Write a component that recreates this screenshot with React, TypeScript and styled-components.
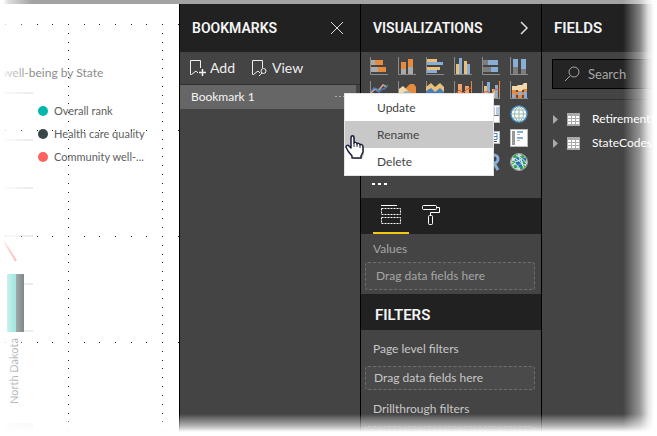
import React from "react";
import styled, { createGlobalStyle, css } from "styled-components";

const GlobalStyle = createGlobalStyle`
  * { box-sizing: border-box; }
  body {
    margin: 0;
    background: #fff;
    font-family: Lato, "Open Sans", sans-serif;
    font-size: 12px;
    line-height: 16px;
    overflow: hidden;
  }
  button, input { font: inherit; color: inherit; }
  button { border: 0; padding: 0; background: none; text-align: left; }
  h2, h3, p, ul { margin: 0; padding: 0; }
  ul { list-style: none; }
`;

const Frame = styled.div`
  position: relative;
  display: flex;
  flex-direction: column;
  height: 100vh;
  overflow: hidden;
`;

const TopStrip = styled.div`
  flex: none;
  height: 4px;
  background: #a3a3a3;
`;

const Workspace = styled.main`
  flex: 1;
  min-height: 0;
  display: grid;
  grid-template-columns: minmax(0, 1fr) 181px 181px 116px;
`;

const Fade = styled.div<{ $side: "left" | "right" | "bottom" }>`
  position: absolute;
  pointer-events: none;
  z-index: 5;
  ${(p) =>
    p.$side === "left" &&
    css`
      inset: 0 auto 0 0;
      width: 32px;
      background: linear-gradient(to right, #fff 3px, rgba(255, 255, 255, 0.65) 8px, rgba(255, 255, 255, 0));
    `}
  ${(p) =>
    p.$side === "right" &&
    css`
      inset: 0 0 0 auto;
      width: 34px;
      background: linear-gradient(to left, #fff 3px, rgba(255, 255, 255, 0.85) 9px, rgba(255, 255, 255, 0.45) 17px, rgba(255, 255, 255, 0));
    `}
  ${(p) =>
    p.$side === "bottom" &&
    css`
      inset: auto 0 0 0;
      height: 22px;
      background: linear-gradient(to top, #fff 4px, rgba(255, 255, 255, 0.6) 10px, rgba(255, 255, 255, 0));
    `}
`;

const Report = styled.section`
  position: relative;
  overflow: hidden;
  background: #fff;
  padding-top: 61px;
`;

const ChartDrawing = styled.svg`
  position: absolute;
  top: 0;
  left: 0;
`;

const ChartTitle = styled.h3`
  font-weight: 400;
  font-size: 12px;
  color: #8c8c8c;
  white-space: nowrap;
  padding-left: 3px;
`;

const Legend = styled.ul`
  padding: 18px 0 0 38px;
`;

const LegendItem = styled.li`
  display: flex;
  align-items: center;
  gap: 6px;
  height: 23px;
  font-size: 11px;
  color: #606060;
  white-space: nowrap;
`;

const Swatch = styled.span<{ $color: string }>`
  width: 10px;
  height: 10px;
  border-radius: 50%;
  background: ${(p) => p.$color};
`;

const Panel = styled.section`
  min-width: 0;
  border-left: 1px solid #000;
  background: #444;
  color: #fff;
`;

const PanelHeader = styled.header`
  display: flex;
  align-items: center;
  justify-content: space-between;
  height: 48px;
  padding: 0 12px;
  background: #212121;
`;

const PanelTitle = styled.h2<{ $large?: boolean }>`
  font-family: Roboto, sans-serif;
  font-size: ${(p) => (p.$large ? 15 : 14)}px;
  line-height: 20px;
  font-weight: 600;
  color: #f5f5f5;
`;

const IconButton = styled.button`
  display: flex;
  color: #ddd;
`;

const BookmarkTools = styled.div`
  display: flex;
  gap: 16px;
  height: 33px;
  padding: 0 9px;
  border-bottom: 1px solid #303030;
`;

const ToolButton = styled.button`
  display: flex;
  align-items: center;
  gap: 3px;
  font-size: 14px;
  color: #eee;
`;

const BookmarkRow = styled.div`
  position: relative;
  display: flex;
  align-items: center;
  justify-content: space-between;
  height: 24px;
  margin-right: 4px;
  padding: 0 12px 0 11px;
  background: #666;
`;

const BookmarkName = styled.button`
  color: #f5f5f5;
`;

const Menu = styled.div`
  position: absolute;
  top: 8px;
  right: -138px;
  z-index: 3;
  width: 150px;
  border: 1px solid #e4e4e4;
  background: #fff;
`;

const MenuItem = styled.button<{ $active?: boolean }>`
  display: block;
  width: 100%;
  height: 27px;
  padding: 0 32px;
  color: #444;
  background: ${(p) => (p.$active ? "#c8c8c8" : "#fff")};
`;

const Pointer = styled.svg`
  position: absolute;
  top: 40px;
  left: 0;
`;

const Gallery = styled.div`
  display: grid;
  grid-template-columns: repeat(6, 18px);
  gap: 6px 10px;
  padding: 5px 9px 9px;
`;

const GalleryButton = styled.button`
  display: flex;
  height: 18px;
`;

const MoreButton = styled.button`
  display: flex;
  margin: 0 0 12px 10px;
`;

const TabBar = styled.div`
  display: flex;
  gap: 4px;
  height: 36px;
  padding: 0 12px;
  background: #212121;
`;

const Tab = styled.button<{ $active?: boolean }>`
  display: flex;
  align-items: center;
  justify-content: center;
  width: 36px;
  border-bottom: 2px solid ${(p) => (p.$active ? "#f2c811" : "transparent")};
`;

const Well = styled.div<{ $dim?: boolean }>`
  display: flex;
  flex-direction: column;
  gap: ${(p) => (p.$dim ? 5 : 9)}px;
  padding: ${(p) => (p.$dim ? "7px 6px 4px 4px" : "11px 6px 0 4px")};
  color: ${(p) => (p.$dim ? "#a6a6a6" : "#c8c8c8")};
`;

const WellLabel = styled.p`
  padding-left: 8px;
`;

const DropZone = styled.div<{ $dim?: boolean }>`
  display: flex;
  align-items: center;
  height: ${(p) => (p.$dim ? 28 : 24)}px;
  padding-left: ${(p) => (p.$dim ? 10 : 8)}px;
  border: 1px dashed #6e6e6e;
  border-radius: 3px;
  background: #4a4a4a;
`;

const FiltersHeader = styled.header`
  display: flex;
  align-items: center;
  height: 36px;
  padding: 6px 14px 0;
  background: #212121;
`;

const SearchBox = styled.label`
  display: flex;
  align-items: center;
  gap: 8px;
  height: 30px;
  margin: 7px 0 10px 10px;
  padding-left: 11px;
  border: 1px solid #000;
  background: #242424;
  color: #a6a6a6;
`;

const SearchInput = styled.input`
  min-width: 0;
  flex: 1;
  padding: 0;
  border: 0;
  outline: 0;
  background: none;
  font-size: 13px;
  &::placeholder { color: #a6a6a6; opacity: 1; }
`;

const TableList = styled.ul`
  padding: 7px 0 0 11px;
  border-top: 1px solid #303030;
`;

const TableButton = styled.button`
  display: flex;
  align-items: center;
  height: 24px;
  color: #fff;
  white-space: nowrap;
`;

const TableName = styled.span`
  padding-left: 12px;
`;

const O = "#e68a3e";
const B = "#88add6";
const Y = "#eac078";
const G = "#aaa";
const D = "#7d7d7d";

const Axis = () => <path d="M.5 0V17.5H18" fill="none" stroke="#8c8c8c" />;

const Tile = () => <rect x=".5" y=".5" width="17" height="17" fill="#fff" stroke="#bbb" />;

const glyphs: { name: string; art: React.ReactNode }[] = [
  { name: "Stacked bar chart", art: <><Axis /><path fill={G} d="M1 3h4v5H1zM1 10h7v5H1z" /><path fill={O} d="M5 3h8v5H5zM8 10h8v5H8z" /></> },
  { name: "Stacked column chart", art: <><Axis /><path fill={G} d="M3 12h5v5H3zM10 10h5v7h-5z" /><path fill={O} d="M3 5h5v7H3zM10 2h5v8h-5z" /></> },
  { name: "Clustered bar chart", art: <><Axis /><path fill={Y} d="M1 2h10v3H1zM1 10h13v3H1z" /><path fill={B} d="M1 5h16v3H1zM1 13h10v3H1z" /></> },
  { name: "Clustered column chart", art: <><Axis /><path fill={Y} d="M2 7h3v10H2zM10 4h3v13h-3z" /><path fill={B} d="M5 1h3v16H5zM13 7h3v10h-3z" /></> },
  { name: "100% stacked bar chart", art: <><Axis /><path fill={D} d="M1 3h5v5H1zM1 10h8v5H1z" /><path fill={B} d="M6 3h10v5H6zM9 10h7v5H9z" /></> },
  { name: "100% stacked column chart", art: <><Axis /><path fill={D} d="M3 10h5v7H3zM11 12h5v5h-5z" /><path fill={B} d="M3 2h5v8H3zM11 2h5v10h-5z" /></> },
  { name: "Line chart", art: <><Axis /><path d="M1 12 5 8 8 10 13 4 17 6" fill="none" stroke="#e0a090" strokeWidth="1.5" /><path d="M1 10 4 7 7 8 9 11 12 8 14 8 18 4" fill="none" stroke="#467fba" strokeWidth="1.5" /></> },
  { name: "Area chart", art: <><Axis /><path fill={O} d="M7 8 12 3h4l2 3v11H7z" /><path fill="#f3d9ae" d="M1 8 5 5l4 4 3 3v5H1z" /><path fill={B} d="M1 14 8 10l10 3v4H1z" /></> },
  { name: "Stacked area chart", art: <><Axis /><path fill={Y} d="M0 6 5 2l4 4 5-4 4 4v6H0z" /><path fill="#467fba" d="M0 10 5 7l4 4 5-4 4 4v6H0z" /></> },
  { name: "Line and stacked column chart", art: <><path d="M.5 0V17.5H17.5" fill="none" stroke="#8c8c8c" /><path d="M17.5 0V18" stroke={O} /><path fill="#f0a46b" d="M4 3h4v14H4zM11 5h4v12h-4z" /><path d="m1 13 4-4 4 3 4-4 4-1" fill="none" stroke="#d45b38" /></> },
  { name: "Line and clustered column chart", art: <><Axis /><path d="M17.5 0V18" stroke={O} /><path fill={Y} d="M2 5h3v12H2zM10 8h3v9h-3z" /><path fill={B} d="M5 1h3v16H5zM13 4h3v13h-3z" /><path d="m1 12 4-2 4 3 4-5 4 1" fill="none" stroke="#d45b38" /></> },
  { name: "Ribbon chart", art: <><Axis /><path fill="#f3d9ae" d="M2 5h5l1-1h4l2-2h3v6h-3l-2 2H8L7 9H2z" /><path fill={O} d="M2 9h5l1 1h4l2-2h3v9H2z" /><path fill={B} d="M2 13h3v4H2zM8 11h4v3H8zM14 11h3v6h-3z" /><path fill="#714536" d="M6 9h2v2H6zM12 9h2v2h-2zM6 14h2v3H6zM12 14h2v3h-2z" /></> },
  { name: "Waterfall chart", art: <><Axis /><path fill={O} d="M3 3h4v9H3z" /></> },
  { name: "Scatter chart", art: <><Axis /><circle cx="8" cy="8" r="3" fill={B} /></> },
  { name: "Pie chart", art: <circle cx="9" cy="9" r="8" fill={O} /> },
  { name: "Donut chart", art: <circle cx="9" cy="9" r="6" fill="none" stroke={B} strokeWidth="4" /> },
  { name: "Treemap", art: <><Tile /><path fill="#b9cce3" d="M2 2h7v14H2zM10 2h3v8h-3zM14 2h3v8h-3z" /><path d="M10 10.5h7" stroke="#777" /></> },
  { name: "Map", art: <><circle cx="9" cy="9" r="8" fill="#fff" stroke="#4a8cc4" strokeWidth="1.5" /><path d="M9 1v16M1 9h16M3 5h12M3 13h12M9 1C3 5 3 13 9 17M9 1c6 4 6 12 0 16" fill="none" stroke="#90b8aa" /></> },
  { name: "Filled map", art: <circle cx="9" cy="9" r="8" fill={B} /> },
  { name: "Funnel", art: <path fill={Y} d="M1 2h16v4H1zM4 7h10v4H4z" /> },
  { name: "Gauge", art: <path d="M2 14a7 7 0 0 1 14 0" fill="none" stroke={B} strokeWidth="4" /> },
  { name: "Multi-row card", art: <Tile /> },
  { name: "Card", art: <><rect x=".5" y="2.5" width="17" height="12" fill="#fff" stroke="#bbb" /><path d="M12 4.500h3v6h-3M12 7.500h3M3 5h1v6M6 5h3v3H6v3h3" fill="none" stroke="#467fba" /><path d="M3 12.500h12" stroke="#555" /></> },
  { name: "Slicer", art: <><Tile /><path fill="#999" d="M2 2h3v14H2z" /><path fill={B} d="M7 2h6v2H7zM7 8h6v2H7z" /><path fill="#b5b5b5" d="M7 5h3v1H7zM7 11h3v1H7z" /></> },
  { name: "KPI", art: <Tile /> },
  { name: "Table", art: <Tile /> },
  { name: "Matrix", art: <Tile /> },
  { name: "Shape map", art: <circle cx="9" cy="9" r="8" fill={B} /> },
  { name: "R script visual", art: <path d="M7 17V2h5a4 4 0 0 1 0 8H8m4 0 4 7" fill="none" stroke={B} strokeWidth="3" /> },
  { name: "ArcGIS map", art: <><circle cx="9" cy="9" r="8" fill="#cfe0e6" /><path d="M3 4 8 2M2 10 5 9M4 14 7 13M10 5l4-2M13 10l3-1M10 16l5-3" stroke="#2da54b" strokeWidth="3" /><path d="M5 7 9 5M6 11l5-2M8 14l4-2M12 7l4-1" stroke="#2673aa" strokeWidth="3" /><path d="M2 5c5 0 10 5 12 10M6 2c5 2 9 6 11 9M1 9c4 1 8 4 9 8" fill="none" stroke="#e4eeee" /><circle cx="9" cy="9" r="8.5" fill="none" stroke="#aaa" /></> },
];

const dotColumns = [5, 21, 37, 52, 68, 84, 99, 115, 131, 146, 162, 178];
const dotRows = Array.from({ length: 47 }, (_, i) => Math.round(20 + i * 8.83));
const gridRows = [89, 136, 184, 232, 280, 327];

const Chart = () => (
  <ChartDrawing width="179" height="432" aria-hidden="true">
    {gridRows.map((y) => <rect key={y} x="4" y={y - 1} width="29" height="2" fill="#ebebeb" />)}
    <path d="M0 231 16 257" stroke="#fd625e" strokeWidth="2" opacity=".75" />
    <rect x="7" y="270" width="9" height="58" fill="#57d3c7" />
    <rect x="16" y="270" width="8" height="58" fill="#5b686a" />
    <rect x="4" y="419" width="29" height="9" fill="#f2f2f2" />
    <text transform="translate(18 400) rotate(-90)" fontSize="11" fill="#7a7a7a">North Dakota</text>
    {[20, 126, 232, 338].map((y) => dotColumns.map((x) => <rect key={`${x}-${y}`} x={x} y={y} width="1" height="1" fill="#222" />))}
    {[68, 162].map((x) => dotRows.map((y) => <rect key={`${x}-${y}`} x={x} y={y} width="1" height="1" fill="#222" />))}
  </ChartDrawing>
);

const BookmarkIcon = ({ view }: { view?: boolean }) => (
  <svg width="18" height="18" viewBox="0 0 18 18" fill="none" stroke="#eee" aria-hidden="true">
    <path d="M9 14 7 12 2.500 15.500H1.500V1.500H11.500V9" />
    {view ? <><circle cx="12.500" cy="12" r="2.500" /><path d="m11 14-3 3" /></> : <path d="M13.500 10v7M10 13.500h7" strokeWidth="1.500" />}
  </svg>
);

const TableIcon = () => (
  <svg width="13" height="13" viewBox="0 0 13 13" aria-hidden="true">
    <path fill="#aaa" d="M0 0h13v13H0z" />
    <path fill="#fff" d="M1 3h3v2H1zM5 3h3v2H5zM9 3h3v2H9zM1 6h3v2H1zM5 6h3v2H5zM9 6h3v2H9zM1 9h3v2H1zM5 9h3v2H5zM9 9h3v2H9z" />
  </svg>
);

const legend = [
  { label: "Overall rank", color: "#01b8aa" },
  { label: "Health care quality", color: "#374649" },
  { label: "Community well-...", color: "#fd625e" },
];

export default function App() {
  return (
    <Frame>
      <GlobalStyle />
      <TopStrip />
      <Workspace>
        <Report>
          <ChartTitle>well-being by State</ChartTitle>
          <Legend>
            {legend.map((l) => <LegendItem key={l.label}><Swatch $color={l.color} />{l.label}</LegendItem>)}
          </Legend>
          <Chart />
        </Report>

        <Panel>
          <PanelHeader>
            <PanelTitle>BOOKMARKS</PanelTitle>
            <IconButton aria-label="Close">
              <svg width="20" height="14" viewBox="0 0 20 14" fill="none" stroke="currentColor"><path d="m3 1 12 12M15 1 3 13" /></svg>
            </IconButton>
          </PanelHeader>
          <BookmarkTools>
            <ToolButton><BookmarkIcon />Add</ToolButton>
            <ToolButton><BookmarkIcon view />View</ToolButton>
          </BookmarkTools>
          <BookmarkRow>
            <BookmarkName>Bookmark 1</BookmarkName>
            <IconButton aria-label="Bookmark options">
              <svg width="9" height="2" viewBox="0 0 9 2"><path fill="#aaa" d="M0 0h2v1H0zM4 0h2v1H4zM8 0h1v1H8z" /></svg>
            </IconButton>
            <Menu role="menu">
              <MenuItem role="menuitem">Update</MenuItem>
              <MenuItem role="menuitem" $active>Rename</MenuItem>
              <MenuItem role="menuitem">Delete</MenuItem>
              <Pointer width="22" height="28" viewBox="0 0 22 28" aria-hidden="true">
                <path d="M9 25 4 19 2 15c-1-2 1-3 3-1l2 2V5c0-3 3-3 3 0v5c1-1 3-1 3 1 1-1 3-1 3 1 2-1 3 0 3 2v6l-2 5z" fill="#000" opacity=".25" />
                <path d="M7 24v-2l-4-5-2-4c0-2 2-2 3-1l2 2V4c0-3 3-3 3 0v5c0-1 3-1 3 1 0-1 3-1 3 1 0-1 3-1 3 2v5l-2 4v2z" fill="#fff" stroke="#1b1f3a" strokeWidth="1.500" strokeLinejoin="round" />
                <path d="M9 9v4M12 10v3M15 11v3" stroke="#1b1f3a" />
              </Pointer>
            </Menu>
          </BookmarkRow>
        </Panel>

        <Panel>
          <PanelHeader>
            <PanelTitle>VISUALIZATIONS</PanelTitle>
            <IconButton aria-label="Collapse">
              <svg width="9" height="14" viewBox="0 0 9 14" fill="none" stroke="currentColor" strokeWidth="1.500"><path d="m1 1 6 6-6 6" /></svg>
            </IconButton>
          </PanelHeader>
          <Gallery>
            {glyphs.map((g) => (
              <GalleryButton key={g.name} aria-label={g.name}>
                <svg width="18" height="18" viewBox="0 0 18 18">{g.art}</svg>
              </GalleryButton>
            ))}
          </Gallery>
          <MoreButton aria-label="More visuals">
            <svg width="16" height="6" viewBox="0 0 16 6"><path fill="#fff" d="M1 3h3v2H1zM7 3h3v2H7zM13 3h3v2h-3z" /></svg>
          </MoreButton>
          <TabBar>
            <Tab $active aria-label="Fields">
              <svg width="20" height="20" viewBox="0 0 20 20" fill="none" stroke="#fff"><path d="M0 .5h16" /><path strokeDasharray="2 1" d="M.5 3.500h19v6H.5zM.5 12.500h19v6H.5z" /></svg>
            </Tab>
            <Tab aria-label="Format">
              <svg width="20" height="20" viewBox="0 0 20 20" fill="none" stroke="#fff"><rect x="1.500" y=".5" width="14" height="4" rx="1" /><path d="M15.500 2.500h3v5h-9v3" /><rect x="7.500" y="10.500" width="4" height="9" rx="1" /></svg>
            </Tab>
          </TabBar>
          <Well $dim>
            <WellLabel>Values</WellLabel>
            <DropZone $dim>Drag data fields here</DropZone>
          </Well>
          <FiltersHeader><PanelTitle $large>FILTERS</PanelTitle></FiltersHeader>
          <Well>
            <WellLabel>Page level filters</WellLabel>
            <DropZone>Drag data fields here</DropZone>
          </Well>
          <Well>
            <WellLabel>Drillthrough filters</WellLabel>
            <DropZone />
          </Well>
        </Panel>

        <Panel>
          <PanelHeader><PanelTitle $large>FIELDS</PanelTitle></PanelHeader>
          <SearchBox>
            <svg width="16" height="16" viewBox="0 0 16 16" fill="none" stroke="currentColor" aria-hidden="true"><circle cx="10" cy="6" r="5" /><path d="m6 10-5 5" /></svg>
            <SearchInput aria-label="Search" placeholder="Search" />
          </SearchBox>
          <TableList>
            {["RetirementS", "StateCodes"].map((t) => (
              <li key={t}>
                <TableButton>
                  <svg width="14" height="9" viewBox="0 0 14 9" aria-hidden="true"><path fill="#aaa" d="m0 0 5 4.500L0 9z" /></svg>
                  <TableIcon />
                  <TableName>{t}</TableName>
                </TableButton>
              </li>
            ))}
          </TableList>
        </Panel>
      </Workspace>
      <Fade $side="left" />
      <Fade $side="right" />
      <Fade $side="bottom" />
    </Frame>
  );
}
